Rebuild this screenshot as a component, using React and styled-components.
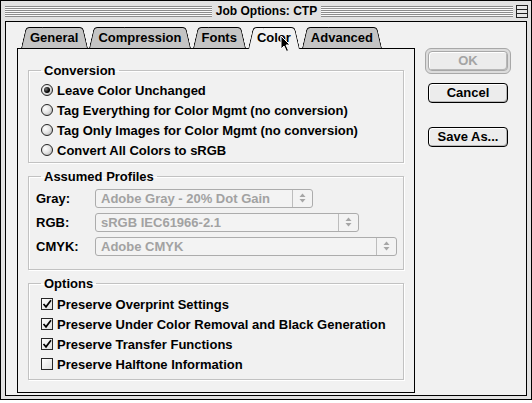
import React from 'react';
import styled, { createGlobalStyle, css } from 'styled-components';

const Global = createGlobalStyle`
  html, body {
    margin: 0;
    padding: 0;
    background: #ffffff;
  }

  body {
    font-family: "Liberation Sans", Arial, sans-serif;
    font-weight: bold;
    font-size: 13px;
    color: #000;
  }
`;

const BG = '#f1f1f1';

const Window = styled.div`
  position: relative;
  width: 532px;
  height: 400px;
  box-sizing: border-box;
  display: flex;
  flex-direction: column;

  background: #e2e2e2;
  border: 1px solid #000;
  box-shadow: 0 2px 0 #555;
`;

const TitleBar = styled.div`
  height: 20px;
  display: flex;
  align-items: center;
  padding: 0 3px 0 4px;
`;

const Stripes = styled.div`
  flex: 1;
  height: 11px;
  background: repeating-linear-gradient(
    to bottom,
    #8c8c8c 0,
    #8c8c8c 1px,
    #fafafa 1px,
    #fafafa 2px
  );
`;

const Title = styled.div`
  padding: 0 4px;
  font-size: 12px;
  line-height: 20px;
  white-space: nowrap;
`;

const TitleRight = styled.div`
  flex: 1;
  display: flex;
  align-items: center;
  gap: 3px;
`;

const ShadeBox = () => (
  <svg width="12" height="13" viewBox="0 0 12 13">
    <rect x="0.5" y="0.5" width="11" height="12" fill="#e8e8e8" stroke="#222" />
    <line x1="1" y1="4.5" x2="11" y2="4.5" stroke="#222" />
    <line x1="1" y1="8.5" x2="11" y2="8.5" stroke="#222" />
  </svg>
);

const Content = styled.div`
  flex: 1;
  display: flex;
  margin: 0 4px 3px;
  padding: 5px 0 0 11px;

  background: ${BG};
  border: 1px solid #000;
`;

const TabArea = styled.div`
  width: 398px;
  display: flex;
  flex-direction: column;
`;

const TabRow = styled.div`
  position: relative;
  z-index: 1;
  display: flex;
  align-items: flex-start;
  gap: 2px;

  height: 22px;
  margin-bottom: -1px;
  padding-left: 4px;
`;

const tabHalf = css`
  content: '';
  position: absolute;
  top: 0;
  bottom: 0;
  width: 60%;
  z-index: -1;
  background: ${props => (props.$active ? BG : '#c4c4c4')};
  border-top: 1px solid #000;
`;

const Tab = styled.div`
  position: relative;
  z-index: ${props => (props.$active ? 2 : 1)};
  height: ${props => (props.$active ? 22 : 21)}px;
  padding: 0 9px;
  line-height: 21px;
  white-space: nowrap;

  &::before {
    ${tabHalf}
    left: 0;
    border-left: 1px solid #000;
    border-top-left-radius: 4px;
    transform: skewX(-13deg);
    transform-origin: bottom left;
  }

  &::after {
    ${tabHalf}
    right: 0;
    border-right: 1px solid #000;
    border-top-right-radius: 4px;
    transform: skewX(13deg);
    transform-origin: bottom right;
  }
`;

const Panel = styled.div`
  position: relative;
  z-index: 0;
  height: 345px;
  box-sizing: border-box;
  padding: 15px 10px 0;

  background: ${BG};
  border: 1px solid #000;
`;

const Group = styled.fieldset`
  margin: ${props => props.$top}px 0 0;
  padding: ${props => props.$pad};
  min-inline-size: 0;

  border: 1px solid #c2c2c2;
  box-shadow: inset 1px 1px 0 #fff, 1px 1px 0 #fff;
`;

const Legend = styled.legend`
  margin-left: 12px;
  padding: 0 3px;
  line-height: 13px;
`;

const OptionRow = styled.div`
  display: flex;
  align-items: center;
  gap: 4px;
  height: 20px;
  padding-left: 12px;
  white-space: nowrap;
`;

const RadioDot = styled.span`
  width: 12px;
  height: 12px;
  box-sizing: border-box;
  border-radius: 50%;
  border: 1px solid #262626;
  background: radial-gradient(circle at 35% 35%, #ffffff 0, #e6e6e6 45%, #a8a8a8 100%);
  display: flex;
  align-items: center;
  justify-content: center;

  &::after {
    content: '';
    display: ${props => (props.$on ? 'block' : 'none')};
    width: 6px;
    height: 6px;
    border-radius: 50%;
    background: radial-gradient(circle at 35% 35%, #777 0, #000 60%);
  }
`;

const CheckBox = styled.span`
  width: 12px;
  height: 12px;
  box-sizing: border-box;
  border: 1px solid #262626;
  background: linear-gradient(135deg, #ffffff, #dedede);
  display: flex;
  align-items: center;
  justify-content: center;
`;

const CheckMark = () => (
  <svg width="10" height="10" viewBox="0 0 10 10">
    <path d="M1.5 5 L4 7.8 L9 1.2" fill="none" stroke="#000" strokeWidth="1.7" />
  </svg>
);

const ProfileRow = styled.div`
  display: flex;
  align-items: center;
  height: 24px;
  padding-left: 7px;
`;

const ProfileLabel = styled.span`
  width: 59px;
`;

const Popup = styled.div`
  width: ${props => props.$width}px;
  height: 19px;
  box-sizing: border-box;
  display: flex;

  border: 1px solid #acacac;
  border-radius: 3px;
  background: #f3f3f3;
  color: #a2a2a2;
`;

const PopupText = styled.span`
  flex: 1;
  padding-left: 5px;
  line-height: 17px;
  white-space: nowrap;
`;

const PopupArrows = styled.span`
  width: 19px;
  border-left: 1px solid #bdbdbd;
  display: flex;
  align-items: center;
  justify-content: center;
`;

const Arrows = () => (
  <svg width="7" height="10" viewBox="0 0 7 10">
    <path d="M3.5 0.5 L6.5 4 L0.5 4 Z" fill="#a6a6a6" />
    <path d="M3.5 9.5 L6.5 6 L0.5 6 Z" fill="#a6a6a6" />
  </svg>
);

const ButtonColumn = styled.div`
  display: flex;
  flex-direction: column;
  align-items: flex-start;
  margin-left: 10px;
  padding-top: 21px;
`;

const DefaultRing = styled.div`
  width: 86px;
  box-sizing: border-box;
  padding: 2px;
  border: 1px solid #a8a8a8;
  border-radius: 6px;
  background: #dcdcdc;
`;

const Button = styled.div`
  width: 80px;
  height: 20px;
  box-sizing: border-box;
  margin: ${props => props.$top || 0}px 0 0 ${props => (props.$inRing ? 0 : 3)}px;

  border: 1px solid ${props => (props.$disabled ? '#a8a8a8' : '#000')};
  border-radius: 4px;
  background: #ececec;
  box-shadow: inset 1px 1px 0 #fff, inset -1px -1px 0 #b8b8b8;

  color: ${props => (props.$disabled ? '#a4a4a4' : '#000')};
  text-align: center;
  line-height: 18px;
`;

const Cursor = styled.svg`
  position: absolute;
  z-index: 10;
  left: 279px;
  top: 34px;
`;

const tabs = ['General', 'Compression', 'Fonts', 'Color', 'Advanced'];

const conversions = [
  ['Leave Color Unchanged', true],
  ['Tag Everything for Color Mgmt (no conversion)', false],
  ['Tag Only Images for Color Mgmt (no conversion)', false],
  ['Convert All Colors to sRGB', false],
];

const profiles = [
  ['Gray:', 'Adobe Gray - 20% Dot Gain', 218],
  ['RGB:', 'sRGB IEC61966-2.1', 264],
  ['CMYK:', 'Adobe CMYK', 302],
];

const options = [
  ['Preserve Overprint Settings', true],
  ['Preserve Under Color Removal and Black Generation', true],
  ['Preserve Transfer Functions', true],
  ['Preserve Halftone Information', false],
];

export default function App() {
  return (
    <>
      <Global />
      <Window>
        <TitleBar>
          <Stripes />
          <Title>Job Options: CTP</Title>
          <TitleRight>
            <Stripes />
            <ShadeBox />
          </TitleRight>
        </TitleBar>

        <Content>
          <TabArea>
            <TabRow>
              {tabs.map(name => (
                <Tab key={name} $active={name === 'Color'}>{name}</Tab>
              ))}
            </TabRow>

            <Panel>
              <Group $top={0} $pad="3px 0 2px">
                <Legend>Conversion</Legend>
                {conversions.map(([label, on]) => (
                  <OptionRow key={label}>
                    <RadioDot $on={on} />
                    {label}
                  </OptionRow>
                ))}
              </Group>

              <Group $top={7} $pad="3px 0 11px">
                <Legend>Assumed Profiles</Legend>
                {profiles.map(([label, value, width]) => (
                  <ProfileRow key={label}>
                    <ProfileLabel>{label}</ProfileLabel>
                    <Popup $width={width}>
                      <PopupText>{value}</PopupText>
                      <PopupArrows><Arrows /></PopupArrows>
                    </Popup>
                  </ProfileRow>
                ))}
              </Group>

              <Group $top={7} $pad="4px 0 5px">
                <Legend>Options</Legend>
                {options.map(([label, on]) => (
                  <OptionRow key={label}>
                    <CheckBox>{on && <CheckMark />}</CheckBox>
                    {label}
                  </OptionRow>
                ))}
              </Group>
            </Panel>
          </TabArea>

          <ButtonColumn>
            <DefaultRing>
              <Button $inRing $disabled>OK</Button>
            </DefaultRing>
            <Button $top={9}>Cancel</Button>
            <Button $top={24}>Save As...</Button>
          </ButtonColumn>
        </Content>

        <Cursor width="12" height="18" viewBox="0 0 12 18">
          <path
            d="M1 1 L1 14 L4 11 L6.5 16.5 L8.5 15.5 L6 10 L10 10 Z"
            fill="#000"
            stroke="#fff"
            strokeWidth="1"
            strokeLinejoin="miter"
          />
        </Cursor>
      </Window>
    </>
  );
}
